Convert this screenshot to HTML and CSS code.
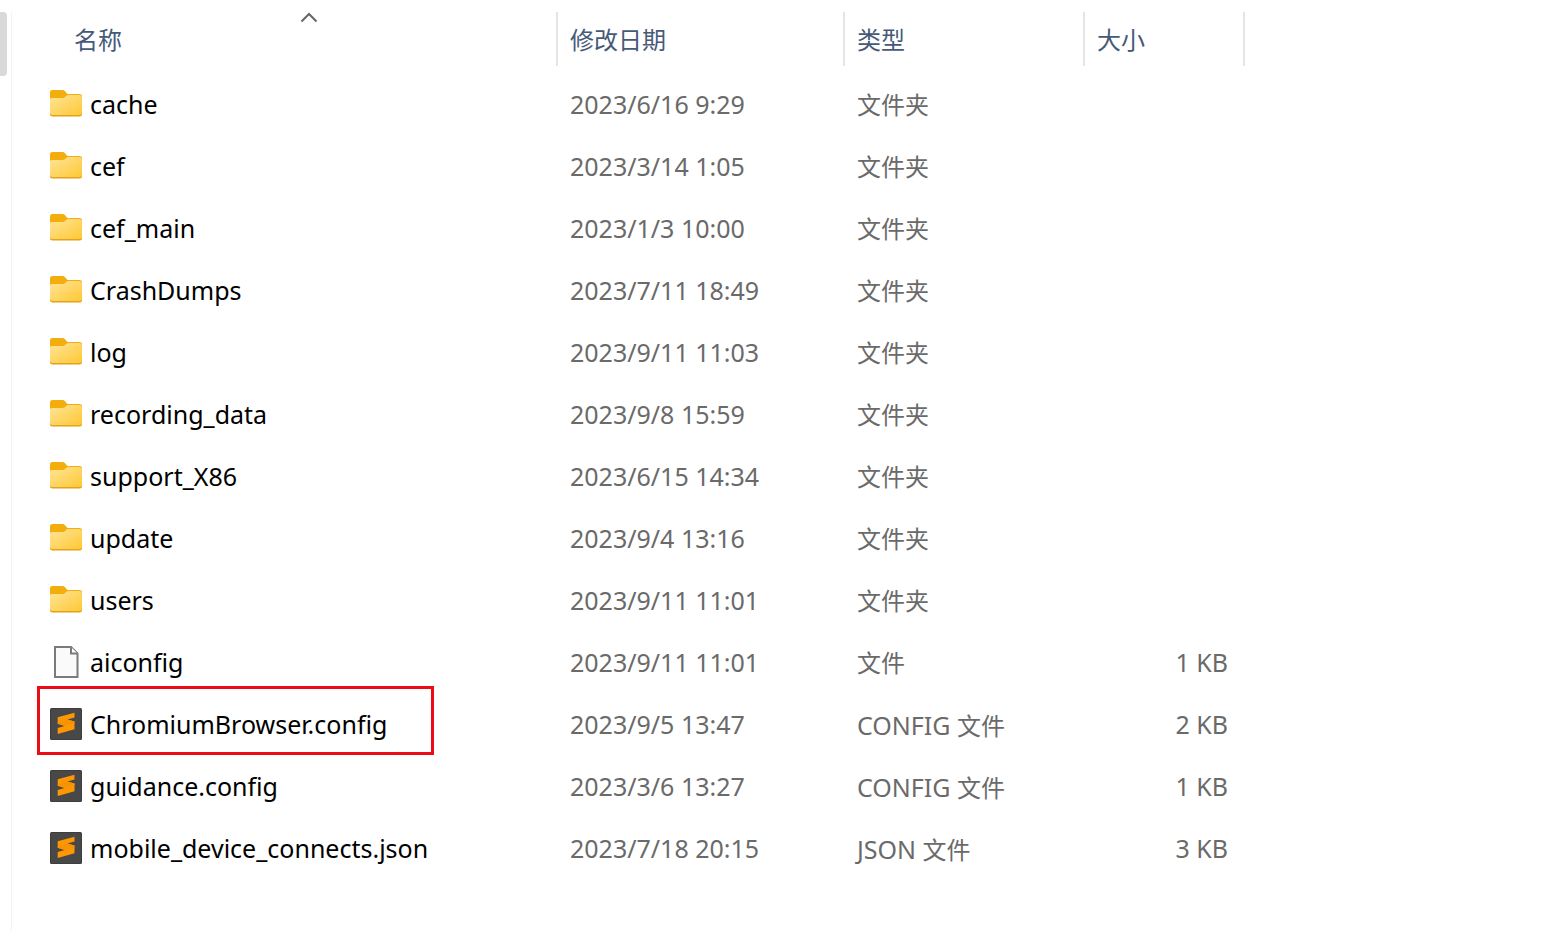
FILE: index.html
```html
<!DOCTYPE html>
<html lang="zh-CN">
<head>
<meta charset="utf-8">
<title>文件列表</title>
<link rel="stylesheet" href="styles.css">
</head>
<body>
<svg class="sprite" aria-hidden="true">
  <defs>
    <linearGradient id="folder-fill" x1="0" y1="0" x2="1" y2="1">
      <stop offset="0" stop-color="#ffe599"/>
      <stop offset="1" stop-color="#ffc834"/>
    </linearGradient>
    <symbol id="folder" viewBox="0 0 32 32">
      <path d="M0 13V4.500Q0 2 2.500 2H12.500Q14 2 15 3.200L17.400 6H29.500Q32 6 32 8.500V13Z" fill="#f3ad0c"/>
      <path d="M0 11.500Q0 10 1.500 10H12.500Q14 10 15 9L16.300 7.700Q17 7 18 7H29.500Q32 7 32 9.500V26Q32 28.500 29.500 28.500H2.500Q0 28.500 0 26Z" fill="#e5a11a"/>
      <path d="M0 11.500Q0 10 1.500 10H12.500Q14 10 15 9L16.300 7.700Q17 7 18 7H29.500Q32 7 32 9.500V24.500Q32 27 29.500 27H2.500Q0 27 0 24.500Z" fill="url(#folder-fill)"/>
    </symbol>
    <symbol id="blank" viewBox="0 0 32 32">
      <path d="M5 1H21L27.500 7.500V31H5Z" fill="#fafafa" stroke="#7b7b77" stroke-width="2"/>
      <path d="M21 1V7.500H27.500" fill="#fff" stroke="#7b7b77" stroke-width="2"/>
    </symbol>
    <symbol id="sublime" viewBox="0 0 32 32">
      <rect width="32" height="32" rx="1.500" fill="#3d3d3d"/>
      <rect x="1" y="1" width="30" height="30" rx="1" fill="#484848"/>
      <path d="M24.500 4.700V9.500L17.300 11.500L24.500 13.600V21.200L7.700 26V20L14.700 18L7.700 15.800V9.200Z" fill="#ff9800"/>
      <path d="M7.700 14.500V15.800L14.700 18L20 16.400L24.500 15.500V13.600L17.300 11.500L13 13Z" fill="#f79203"/>
    </symbol>
  </defs>
</svg>
<main class="window">
  <div class="gutter"><div class="thumb"></div></div>
  <section class="pane">
    <table class="files">
      <colgroup><col class="col-name"><col class="col-date"><col class="col-type"><col class="col-size"></colgroup>
      <thead>
        <tr>
          <th class="name-head"><button class="head" type="button">名称<svg class="caret" viewBox="0 0 18 12" aria-hidden="true"><path d="M1.500 9.500L9 2L16.500 9.500" fill="none" stroke="#666" stroke-width="2"/></svg></button></th>
          <th><button class="head" type="button">修改日期</button></th>
          <th><button class="head" type="button">类型</button></th>
          <th><button class="head" type="button">大小</button></th>
        </tr>
      </thead>
      <tbody>
        <tr><td class="name"><div class="item"><svg class="icon"><use href="#folder"/></svg>cache</div></td><td>2023/6/16 9:29</td><td class="type">文件夹</td><td></td></tr>
        <tr><td class="name"><div class="item"><svg class="icon"><use href="#folder"/></svg>cef</div></td><td>2023/3/14 1:05</td><td class="type">文件夹</td><td></td></tr>
        <tr><td class="name"><div class="item"><svg class="icon"><use href="#folder"/></svg>cef_main</div></td><td>2023/1/3 10:00</td><td class="type">文件夹</td><td></td></tr>
        <tr><td class="name"><div class="item"><svg class="icon"><use href="#folder"/></svg>CrashDumps</div></td><td>2023/7/11 18:49</td><td class="type">文件夹</td><td></td></tr>
        <tr><td class="name"><div class="item"><svg class="icon"><use href="#folder"/></svg>log</div></td><td>2023/9/11 11:03</td><td class="type">文件夹</td><td></td></tr>
        <tr><td class="name"><div class="item"><svg class="icon"><use href="#folder"/></svg>recording_data</div></td><td>2023/9/8 15:59</td><td class="type">文件夹</td><td></td></tr>
        <tr><td class="name"><div class="item"><svg class="icon"><use href="#folder"/></svg>support_X86</div></td><td>2023/6/15 14:34</td><td class="type">文件夹</td><td></td></tr>
        <tr><td class="name"><div class="item"><svg class="icon"><use href="#folder"/></svg>update</div></td><td>2023/9/4 13:16</td><td class="type">文件夹</td><td></td></tr>
        <tr><td class="name"><div class="item"><svg class="icon"><use href="#folder"/></svg>users</div></td><td>2023/9/11 11:01</td><td class="type">文件夹</td><td></td></tr>
        <tr><td class="name"><div class="item"><svg class="icon"><use href="#blank"/></svg>aiconfig</div></td><td>2023/9/11 11:01</td><td class="type">文件</td><td class="size">1 KB</td></tr>
        <tr><td class="name"><div class="item"><svg class="icon"><use href="#sublime"/></svg>ChromiumBrowser.config<span class="marker"></span></div></td><td>2023/9/5 13:47</td><td class="type"><span class="ext">CONFIG </span>文件</td><td class="size">2 KB</td></tr>
        <tr><td class="name"><div class="item"><svg class="icon"><use href="#sublime"/></svg>guidance.config</div></td><td>2023/3/6 13:27</td><td class="type"><span class="ext">CONFIG </span>文件</td><td class="size">1 KB</td></tr>
        <tr><td class="name"><div class="item"><svg class="icon"><use href="#sublime"/></svg>mobile_device_connects.json</div></td><td>2023/7/18 20:15</td><td class="type"><span class="ext">JSON </span>文件</td><td class="size">3 KB</td></tr>
      </tbody>
    </table>
  </section>
</main>
</body>
</html>
```
FILE: styles.css
```css
* {
  box-sizing: border-box;
}

body {
  margin: 0;
  background: #fff;
  color: #6a6a6a;
  font-family: "Noto Sans", "Noto Sans CJK SC", sans-serif;
  font-size: 24px;
  line-height: 32px;
}

.sprite {
  position: absolute;
  width: 0;
  height: 0;
}

.window {
  display: flex;
  min-height: 100vh;
  padding-top: 12px;
}

.gutter {
  flex: none;
  width: 11px;
}

.thumb {
  width: 7px;
  height: 64px;
  border-radius: 0 4px 4px 0;
  background: #d9d9d9;
}

.pane {
  flex: 1;
  border-left: 1px solid #f3f3f3;
}

.files {
  width: 1233px;
  table-layout: fixed;
  border-spacing: 0;
}

.col-name { width: 546px; }
.col-date { width: 287px; }
.col-type { width: 240px; }
.col-size { width: 160px; }

th {
  padding: 0 0 8px;
  font-weight: 400;
}

.name-head {
  padding-left: 50px;
}

.head {
  position: relative;
  display: block;
  width: 100%;
  height: 54px;
  padding: 2px 12px 0;
  border: 0;
  border-right: 2px solid #e5e5e5;
  background: none;
  color: #465a78;
  font: inherit;
  text-align: left;
}

.caret {
  position: absolute;
  top: 0;
  left: 50%;
  width: 18px;
  height: 12px;
  transform: translateX(-50%);
}

td {
  height: 62px;
  padding: 0 12px 2px;
  font-size: 25px;
  white-space: nowrap;
}

.type {
  padding-bottom: 0;
  font-size: 24px;
}

.ext {
  font-size: 25px;
}

.name {
  padding: 0 0 2px 38px;
  color: #000;
}

.item {
  position: relative;
  display: flex;
  align-items: center;
  gap: 8px;
}

.icon {
  flex: none;
  width: 32px;
  height: 32px;
}

.marker {
  position: absolute;
  top: -22px;
  left: -13px;
  width: 397px;
  height: 69px;
  border: 3px solid #ec0c14;
}

.size {
  padding-right: 17px;
  text-align: right;
}
```
